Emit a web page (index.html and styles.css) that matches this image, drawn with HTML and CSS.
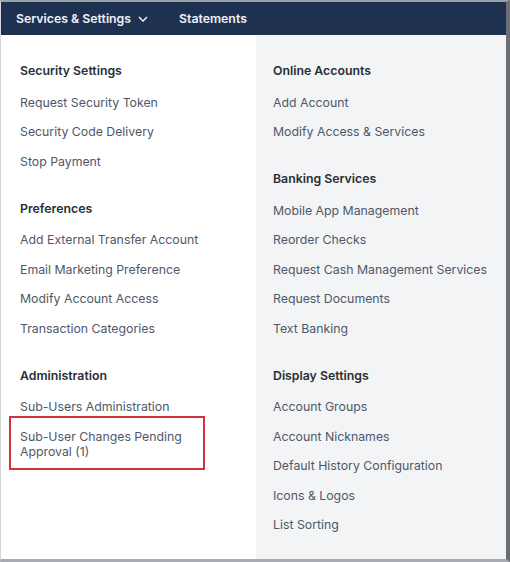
FILE: index.html
```html
<!DOCTYPE html>
<html>
<head>
<meta charset="utf-8">
<link rel="stylesheet" href="styles.css">
</head>
<body>
<div class="frame">
  <nav class="topnav">
    <span class="nav-item">Services &amp; Settings
      <svg class="chev" width="10" height="6" viewBox="0 0 10 6"><path d="M1 1l4 4 4-4" fill="none" stroke="#ffffff" stroke-width="1.3"/></svg>
    </span>
    <span class="nav-item">Statements</span>
  </nav>
  <div class="menu">
    <div class="col col-left">
      <section class="sec">
        <h3>Security Settings</h3>
        <ul>
          <li>Request Security Token</li>
          <li>Security Code Delivery</li>
          <li>Stop Payment</li>
        </ul>
      </section>
      <section class="sec">
        <h3>Preferences</h3>
        <ul>
          <li>Add External Transfer Account</li>
          <li>Email Marketing Preference</li>
          <li>Modify Account Access</li>
          <li>Transaction Categories</li>
        </ul>
      </section>
      <section class="sec">
        <h3>Administration</h3>
        <ul>
          <li>Sub-Users Administration</li>
          <li class="wrap highlight">Sub-User Changes Pending Approval (1)</li>
        </ul>
      </section>
    </div>
    <div class="col col-right">
      <section class="sec">
        <h3>Online Accounts</h3>
        <ul>
          <li>Add Account</li>
          <li>Modify Access &amp; Services</li>
        </ul>
      </section>
      <section class="sec">
        <h3>Banking Services</h3>
        <ul>
          <li>Mobile App Management</li>
          <li>Reorder Checks</li>
          <li>Request Cash Management Services</li>
          <li>Request Documents</li>
          <li>Text Banking</li>
        </ul>
      </section>
      <section class="sec">
        <h3>Display Settings</h3>
        <ul>
          <li>Account Groups</li>
          <li>Account Nicknames</li>
          <li>Default History Configuration</li>
          <li>Icons &amp; Logos</li>
          <li>List Sorting</li>
        </ul>
      </section>
    </div>
  </div>
</div>
</body>
</html>
```
FILE: styles.css
```css
* { box-sizing: border-box; }
html, body { margin: 0; padding: 0; }
body {
  width: 510px;
  height: 562px;
  font-family: Inter, "Noto Sans", "Liberation Sans", sans-serif;
  background: #ffffff;
  overflow: hidden;
}
.frame {
  width: 510px;
  height: 562px;
  display: flex;
  flex-direction: column;
  border-top: 2px solid #9aa0a8;
  border-right: 4px solid #6b6e73;
  border-bottom: 3px solid #a7abb1;
  border-left: 1px solid #d5d7da;
}
.topnav {
  height: 33px;
  background: #1f3150;
  display: flex;
  align-items: center;
  padding-left: 15px;
  gap: 31px;
  flex-shrink: 0;
}
.nav-item {
  color: #eef1f6;
  font-size: 12.3px;
  font-weight: 600;
  display: flex;
  align-items: center;
  gap: 7px;
}
.chev { margin-top: 1px; }
.menu {
  flex: 1;
  display: flex;
}
.col {
  display: flex;
  flex-direction: column;
  gap: 31px;
  padding-top: 28px;
}
.col-left {
  width: 255px;
  background: #ffffff;
  padding-left: 19px;
}
.col-right {
  flex: 1;
  background: #f3f4f6;
  padding-left: 17px;
}
.sec h3 {
  margin: 0 0 15.5px 0;
  font-size: 12.3px;
  line-height: 16px;
  font-weight: 600;
  color: #2a2e35;
}
.sec ul {
  list-style: none;
  margin: 0;
  padding: 0;
  display: flex;
  flex-direction: column;
  gap: 13.5px;
}
.sec li {
  font-size: 12.3px;
  line-height: 16px;
  color: #4f5868;
}
.sec li.wrap {
  max-width: 175px;
  line-height: 15px;
}
.highlight { position: relative; }
.highlight::after {
  content: "";
  position: absolute;
  left: -11px;
  top: -13px;
  width: 192px;
  height: 50px;
  border: 2px solid #d1333b;
}
```
